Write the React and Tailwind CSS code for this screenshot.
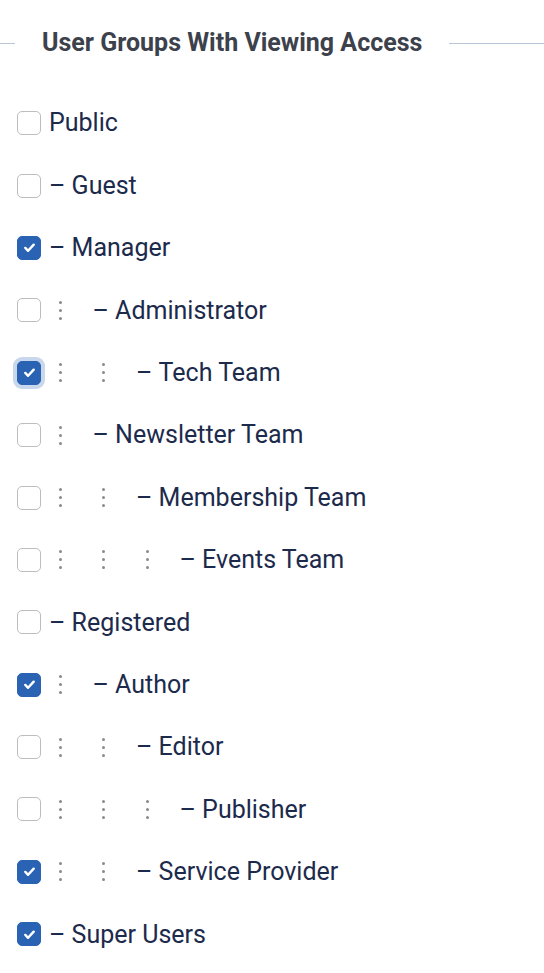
import React, { useState } from "react";

const groups = [
  { name: "Public", level: 0, root: true, checked: false },
  { name: "Guest", level: 0, checked: false },
  { name: "Manager", level: 0, checked: true },
  { name: "Administrator", level: 1, checked: false },
  { name: "Tech Team", level: 2, checked: true, focus: true },
  { name: "Newsletter Team", level: 1, checked: false },
  { name: "Membership Team", level: 2, checked: false },
  { name: "Events Team", level: 3, checked: false },
  { name: "Registered", level: 0, checked: false },
  { name: "Author", level: 1, checked: true },
  { name: "Editor", level: 2, checked: false },
  { name: "Publisher", level: 3, checked: false },
  { name: "Service Provider", level: 2, checked: true },
  { name: "Super Users", level: 0, checked: true },
];

const Dots = () => (
  <span className="flex w-[43.5px] shrink-0 pl-[9.5px]">
    <span className="flex flex-col gap-[5px]">
      <span className="w-[3px] h-[3px] rounded-full bg-[#8a8a8a]" />
      <span className="w-[3px] h-[3px] rounded-full bg-[#8a8a8a]" />
      <span className="w-[3px] h-[3px] rounded-full bg-[#8a8a8a]" />
    </span>
  </span>
);

const Checkbox = ({ checked, focus, onClick }) => (
  <button
    onClick={onClick}
    className={
      "w-6 h-6 shrink-0 rounded-[5px] flex items-center justify-center " +
      (checked
        ? "bg-[#2a63b3] border-[1.5px] border-[#2a63b3]"
        : "bg-white border-[1.5px] border-[#bdbdbd]") +
      (focus ? " ring-4 ring-[#c9d7ec]" : "")
    }
  >
    {checked && (
      <svg width="15" height="15" viewBox="0 0 16 16" fill="none">
        <path
          d="M3.5 8.5l3 3 6-6.5"
          stroke="white"
          strokeWidth="2.6"
          strokeLinecap="round"
          strokeLinejoin="round"
        />
      </svg>
    )}
  </button>
);

export default function App() {
  const [items, setItems] = useState(groups);

  const toggle = (i) =>
    setItems((prev) =>
      prev.map((g, idx) => (idx === i ? { ...g, checked: !g.checked } : g))
    );

  return (
    <div className="w-[544px] h-[973px] bg-white overflow-hidden font-['Roboto',sans-serif]">
      <div className="flex items-center h-[86px]">
        <div className="w-[15px] h-px bg-[#b9c6d8]" />
        <h2 className="px-[27px] text-[25px] font-bold text-[#3c414b] whitespace-nowrap">
          User Groups With Viewing Access
        </h2>
        <div className="flex-1 h-px bg-[#b9c6d8]" />
      </div>

      <div className="flex flex-col pt-[6px] pl-[17px]">
        {items.map((g, i) => (
          <div key={g.name} className="flex items-center h-[62.4px]">
            <Checkbox checked={g.checked} focus={g.focus} onClick={() => toggle(i)} />
            <label className="ml-2 flex items-center text-[25px] text-[#1c2a4c] whitespace-nowrap">
              {Array.from({ length: g.level }).map((_, k) => (
                <Dots key={k} />
              ))}
              {g.root ? g.name : <span>&ndash;&nbsp;{g.name}</span>}
            </label>
          </div>
        ))}
      </div>
    </div>
  );
}
